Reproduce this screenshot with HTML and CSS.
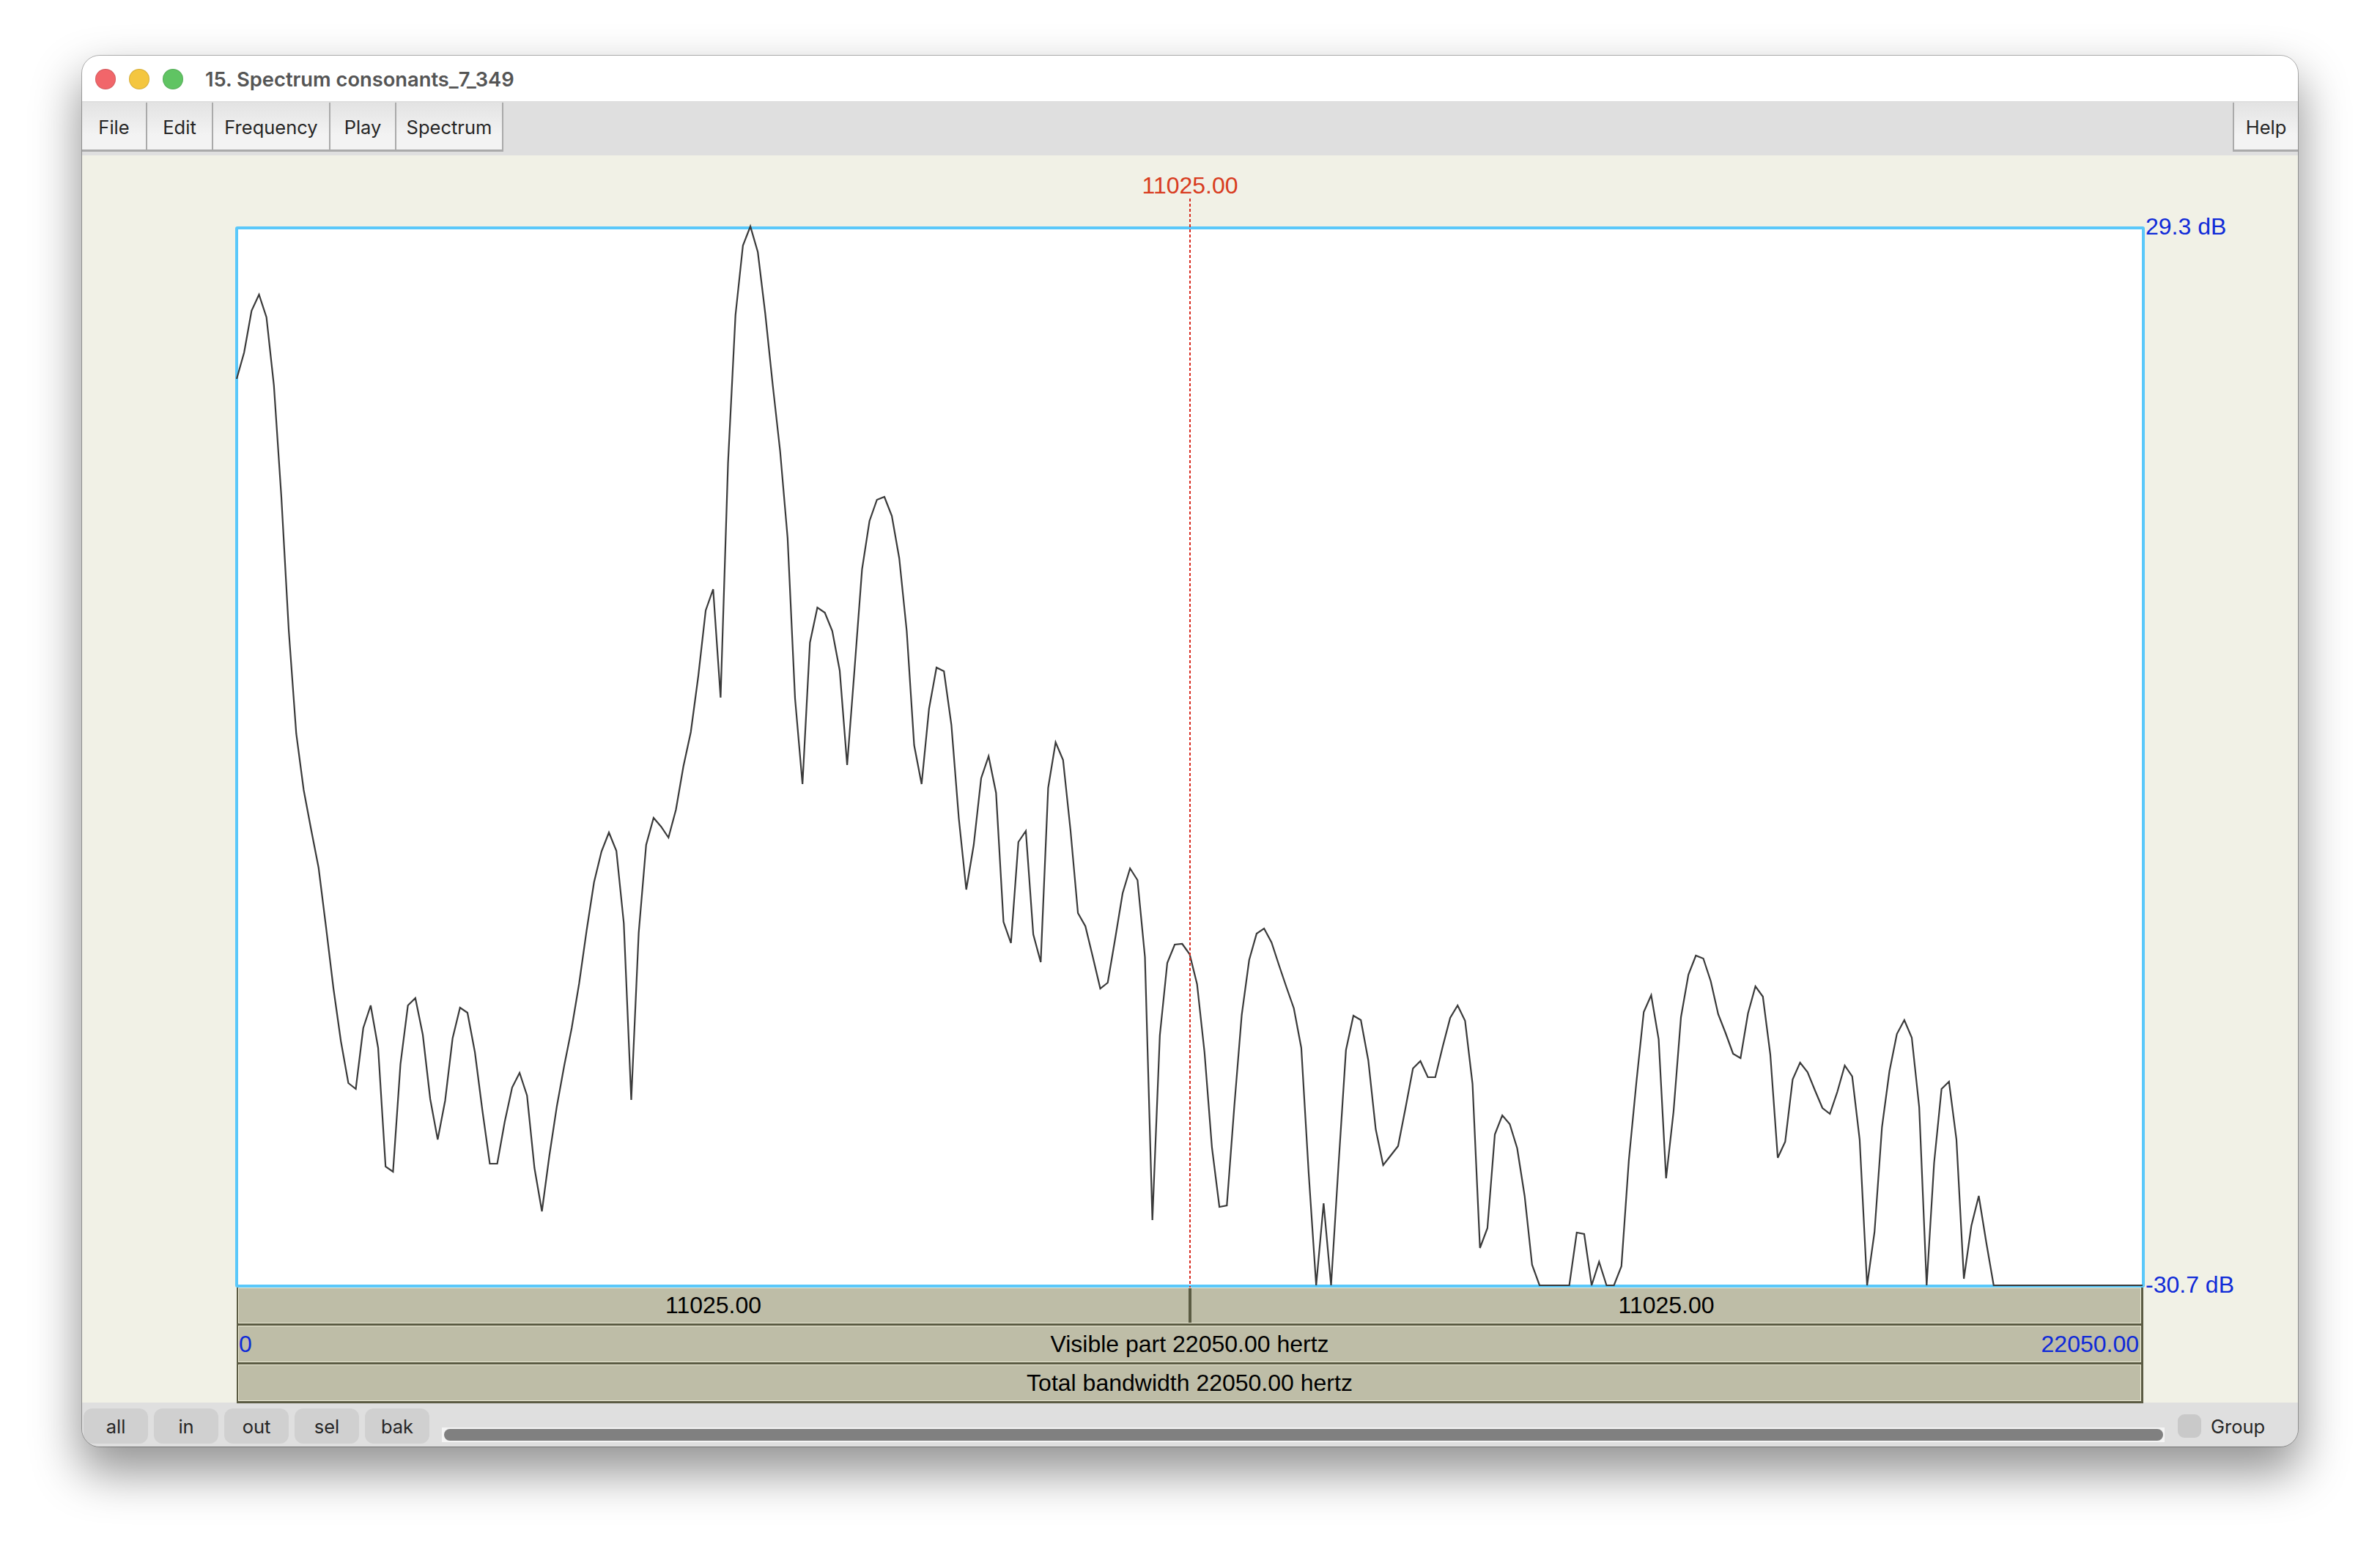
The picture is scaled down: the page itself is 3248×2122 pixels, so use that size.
FILE: index.html
```html
<!DOCTYPE html>
<html lang="en">

<head>
    <meta charset="UTF-8">
    <title>15. Spectrum consonants_7_349</title>
    <link rel="stylesheet" href="styles.css">
</head>

<body>
    <div class="window">
        <div class="titlebar">
            <span class="light light-red"></span>
            <span class="light light-yellow"></span>
            <span class="light light-green"></span>
            <span class="title">15. Spectrum consonants_7_349</span>
        </div>

        <div class="menubar">
            <div class="menu menu-file">File</div>
            <div class="menu menu-edit">Edit</div>
            <div class="menu menu-frequency">Frequency</div>
            <div class="menu menu-play">Play</div>
            <div class="menu menu-spectrum">Spectrum</div>
            <div class="menu menu-help">Help</div>
        </div>

        <div class="content">
            <div class="editor">
                <div class="cursor-value">11025.00</div>
                <div class="cursor-line"></div>

                <div class="plot">
                    <svg class="plot-svg" width="2606" height="1448" viewBox="0 0 2606 1448">
                        <rect class="plot-frame" x="2" y="2" width="2602" height="1444" rx="1"></rect>
                        <polyline class="trace" transform="translate(2,0) scale(10.16,1)" vector-effect="non-scaling-stroke" points="0,208 1,172 2,115 3,93 4,124 5,217 6,369 7,552 8,692 9,769 10,823 11,875 12,956 13,1040 14,1112 15,1169 16,1177 17,1094 18,1063 19,1121 20,1283 21,1290 22,1143 23,1063 24,1053 25,1103 26,1191 27,1246 28,1193 29,1108 30,1066 31,1073 32,1127 33,1206 34,1279 35,1279 36,1222 37,1175 38,1155 39,1186 40,1285 41,1344 42,1268 43,1201 44,1145 45,1094 46,1033 47,961 48,895 49,853 50,827 51,852 52,951 53,1192 54,964 55,844 56,807 57,819 58,834 59,796 60,737 61,690 62,614 63,524 64,495 65,643 66,323 67,121 68,26 69,0 70,35 71,119 72,216 73,307 74,425 75,644 76,761 77,568 78,520 79,527 80,552 81,606 82,735 83,603 84,468 85,402 86,373 87,369 88,395 89,453 90,552 91,708 92,761 93,658 94,602 95,607 96,680 97,808 98,905 99,844 100,753 101,723 102,773 103,949 104,978 105,840 106,825 107,966 108,1004 109,766 110,704 111,728 112,824 113,937 114,955 115,997 116,1040 117,1032 118,972 119,910 120,876 121,892 122,997 123,1356 124,1104 125,1005 126,980 127,979 128,993 129,1034 130,1127 131,1257 132,1338 133,1336 134,1201 135,1076 136,1001 137,965 138,958 139,977 140,1008 141,1038 142,1067 143,1121 144,1293 145,1445 146,1333 147,1445 148,1281 149,1124 150,1077 151,1083 152,1138 153,1232 154,1281 155,1268 156,1255 157,1203 158,1149 159,1139 160,1161 161,1161 162,1119 163,1080 164,1063 165,1084 166,1170 167,1394 168,1367 169,1239 170,1213 171,1225 172,1258 173,1323 174,1417 175,1445 176,1445 177,1445 178,1445 179,1445 180,1373 181,1375 182,1445 183,1413 184,1445 185,1445 186,1419 187,1274 188,1169 189,1072 190,1049 191,1109 192,1299 193,1208 194,1079 195,1021 196,995 197,999 198,1030 199,1075 200,1101 201,1129 202,1135 203,1074 204,1037 205,1051 206,1130 207,1271 208,1249 209,1164 210,1141 211,1154 212,1179 213,1203 214,1211 215,1181 216,1145 217,1160 218,1246 219,1445 220,1372 221,1229 222,1153 223,1102 224,1083 225,1107 226,1202 227,1445 228,1278 229,1177 230,1167 231,1246 232,1436 233,1364 234,1323 235,1386 236,1445 256,1445"></polyline>
                    </svg>
                    <span class="db-label db-top">29.3 dB</span>
                    <span class="db-label db-bottom">-30.7 dB</span>
                </div>

                <div class="bars">
                    <div class="bar bar-split">
                        <div class="bar-half">11025.00</div>
                        <div class="bar-half">11025.00</div>
                    </div>
                    <div class="bar bar-range">
                        <span class="range-start">0</span>
                        <span>Visible part 22050.00 hertz</span>
                        <span class="range-end">22050.00</span>
                    </div>
                    <div class="bar">Total bandwidth 22050.00 hertz</div>
                </div>
            </div>
        </div>

        <div class="bottombar">
            <div class="zoom-btns">
                <div class="zoom-btn">all</div>
                <div class="zoom-btn">in</div>
                <div class="zoom-btn">out</div>
                <div class="zoom-btn">sel</div>
                <div class="zoom-btn">bak</div>
            </div>
            <div class="scrollbar">
                <div class="scroll-thumb"></div>
            </div>
            <div class="group">
                <span class="group-box"></span>
                <span>Group</span>
            </div>
        </div>
    </div>
</body>

</html>
```

FILE: styles.css
```css
* {
    margin: 0;
    padding: 0;
    box-sizing: border-box;
}

html,
body {
    height: 2122px;
    overflow: hidden;
    background: #fff;
}

body {
    padding: 76px 112px 0;
    font-family: Inter, "Noto Sans", sans-serif;
}

.window {
    width: 3024px;
    height: 1898px;
    display: flex;
    flex-direction: column;
    overflow: hidden;
    border-radius: 24px;
    background: #fff;
    outline: 1px solid rgba(0, 0, 0, 0.28);
    box-shadow: 0 32px 64px 4px rgba(0, 0, 0, 0.42);
}

/* title bar */
.titlebar {
    height: 62px;
    flex-shrink: 0;
    display: flex;
    align-items: center;
    padding-left: 18px;
    padding-top: 2px;
    background: #fff;
}

.light {
    width: 28px;
    height: 28px;
    border-radius: 50%;
    margin-right: 18px;
    border: 1px solid rgba(0, 0, 0, 0.12);
}

.light-red {
    background: #f1666a;
}

.light-yellow {
    background: #f4c63f;
}

.light-green {
    background: #60c463;
}

.title {
    margin-left: 12px;
    font-size: 27.3px;
    font-weight: 600;
    color: #555;
}

/* menu bar */
.menubar {
    height: 74px;
    flex-shrink: 0;
    display: flex;
    align-items: flex-start;
    padding-top: 2px;
    background: #dfdfdf;
}

.menu {
    height: 67px;
    display: flex;
    align-items: center;
    justify-content: center;
    padding-top: 3px;
    font-size: 25.5px;
    color: #262626;
    background: linear-gradient(#e3e3e3, #f3f3f3 70%);
    border-right: 2px solid #aaa;
    border-bottom: 3px solid #aaa;
}

.menu-file {
    width: 89px;
}

.menu-edit {
    width: 90px;
}

.menu-frequency {
    width: 160px;
}

.menu-play {
    width: 90px;
}

.menu-spectrum {
    width: 146px;
}

.menu-help {
    width: 89px;
    margin-left: auto;
    border-right: none;
    border-left: 2px solid #aaa;
}

/* editor */
.content {
    height: 1702px;
    flex-shrink: 0;
    padding-left: 209px;
    background: #f1f1e6;
}

.editor {
    position: relative;
    width: 2606px;
    height: 100%;
    padding-top: 97px;
    font-family: "Liberation Sans", Arial, sans-serif;
    font-size: 32px;
}

.cursor-value {
    position: absolute;
    top: 23px;
    left: 0;
    width: 2606px;
    text-align: center;
    line-height: 36px;
    color: #d83b20;
}

.cursor-line {
    position: absolute;
    top: 59px;
    left: 1302px;
    z-index: 2;
    height: 1486px;
    width: 2px;
    background: repeating-linear-gradient(#d82b20 0 4px, transparent 4px 7px);
}

.plot {
    position: relative;
    height: 1448px;
}

.plot-svg {
    display: block;
    overflow: visible;
}

.plot-frame {
    fill: #fff;
    stroke: #5ac8fa;
    stroke-width: 4;
}

.trace {
    fill: none;
    stroke: #3a3a3a;
    stroke-width: 2.2;
    stroke-linejoin: miter;
}

.db-label {
    position: absolute;
    left: 2607px;
    line-height: 36px;
    white-space: nowrap;
    color: #0f2ad8;
}

.db-top {
    top: -18px;
}

.db-bottom {
    top: 1426px;
}

/* olive bars under the plot */
.bars {
    margin: 0 2px;
}

.bar {
    height: 53px;
    display: flex;
    align-items: center;
    justify-content: center;
    color: #000;
    background: #bebda7;
    border: 3px solid #5b5b43;
    border-top-width: 0;
    border-left-width: 2px;
    box-shadow: inset 0 0 0 1px #ecebd6;
}

.bar-split {
    height: 52px;
    padding: 1px 0;
    align-items: stretch;
}

.bar-half {
    flex: 1;
    display: flex;
    align-items: center;
    justify-content: center;
}

.bar-half:first-child {
    flex: none;
    width: 1301px;
    border-right: 4px solid #5b5b43;
}

.bar-range {
    position: relative;
}

.range-start,
.range-end {
    position: absolute;
    color: #0f2ad8;
}

.range-start {
    left: 1px;
}

.range-end {
    right: 3px;
}

/* bottom bar */
.bottombar {
    flex: 1;
    display: flex;
    align-items: flex-start;
    background: #dfdfdf;
    font-size: 25.5px;
    color: #262626;
}

.zoom-btns {
    display: flex;
    gap: 8px;
    margin: 8px 0 0 2px;
}

.zoom-btn {
    width: 88px;
    height: 48px;
    display: flex;
    align-items: center;
    justify-content: center;
    border-radius: 12px;
    background: #d0d0d0;
}

.scrollbar {
    width: 351px;
    flex-grow: 1;
    height: 20px;
    margin: 34px 0 0 17px;
    padding: 2px 2px 2px 3px;
    background: #f4f4f4;
}

.scroll-thumb {
    height: 16px;
    border-radius: 8px;
    background: #808080;
}

.group {
    width: 182px;
    display: flex;
    align-items: center;
    gap: 13px;
    margin-top: 16px;
    padding-left: 18px;
    flex-shrink: 0;
}

.group-box {
    width: 32px;
    height: 32px;
    border-radius: 9px;
    background: #c9c9c9;
}
```
